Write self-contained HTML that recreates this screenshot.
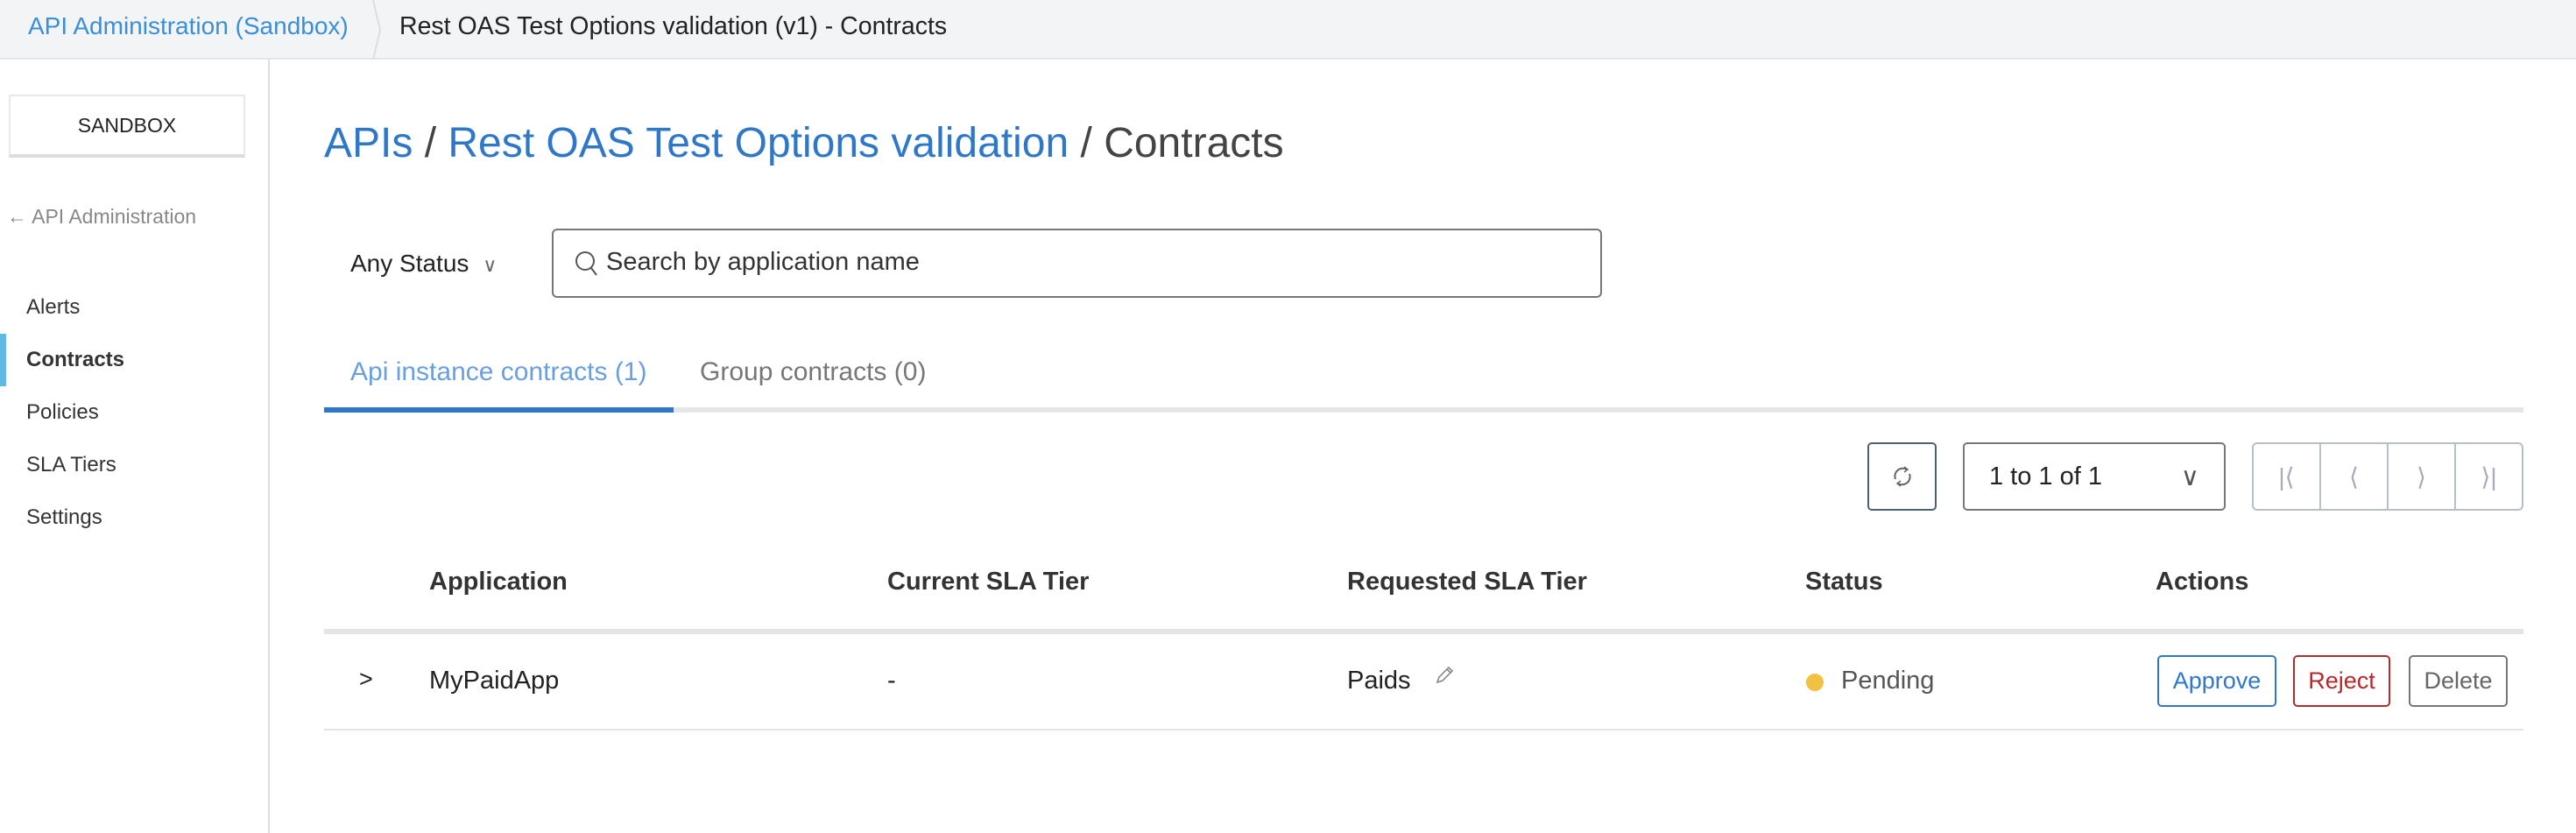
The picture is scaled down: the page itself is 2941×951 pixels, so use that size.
<!DOCTYPE html>
<html><head><meta charset="utf-8"><style>
*{box-sizing:border-box;margin:0;padding:0}
body{width:2941px;height:951px;background:#fff;font-family:"Liberation Sans",sans-serif;color:#333;position:relative;overflow:hidden}
.a{position:absolute;white-space:nowrap}
.top{left:0;top:0;width:2941px;height:68px;background:#f3f4f6;border-bottom:2px solid #e4e5e7}
.side{left:306px;top:68px;width:2px;height:883px;background:#dcdcdc}
.btn{border:2px solid;border-radius:5px;display:flex;align-items:center;justify-content:center;font-size:27px}
.nav{left:30px;font-size:24px;color:#333}
.h{font-weight:bold;font-size:29px;color:#333}
</style></head><body>
<div class="a top"></div>
<div class="a" style="left:32px;top:14px;font-size:28px;color:#3a8fd6">API Administration (Sandbox)</div>
<svg class="a" style="left:424px;top:0" width="14" height="68"><path d="M2 0 L10 34 L2 68" stroke="#dcdde0" stroke-width="2" fill="none"/></svg>
<div class="a" style="left:456px;top:14px;font-size:28.5px;color:#222">Rest OAS Test Options validation (v1) - Contracts</div>
<div class="a side"></div>
<div class="a" style="left:10px;top:108px;width:270px;height:72px;border:2px solid #e8e8e8;border-bottom:4px solid #ddd;display:flex;align-items:center;justify-content:center;font-size:23px;color:#222">SANDBOX</div>
<div class="a" style="left:8px;top:234px;font-size:23px;color:#888">&#8592; API Administration</div>
<div class="a nav" style="top:337px">Alerts</div>
<div class="a" style="left:0;top:381px;width:7px;height:60px;background:#5fb8e6"></div>
<div class="a nav" style="top:397px;font-weight:bold">Contracts</div>
<div class="a nav" style="top:457px">Policies</div>
<div class="a nav" style="top:517px">SLA Tiers</div>
<div class="a nav" style="top:577px">Settings</div>
<div class="a" style="left:370px;top:136px;font-size:48px;color:#444"><span style="color:#2f78c8">APIs</span> / <span style="color:#2f78c8">Rest OAS Test Options validation</span> / Contracts</div>
<div class="a" style="left:400px;top:285px;font-size:28px;color:#222">Any Status <span style="font-size:22px;color:#666;margin-left:8px">&#8744;</span></div>
<div class="a" style="left:630px;top:261px;width:1199px;height:79px;border:2px solid #777;border-radius:6px"></div>
<svg class="a" style="left:655px;top:285px" width="30" height="32"><circle cx="13" cy="13" r="10" stroke="#555" stroke-width="2" fill="none"/><path d="M20 21 L26 29" stroke="#555" stroke-width="2"/></svg>
<div class="a" style="left:692px;top:283px;font-size:29px;color:#333">Search by application name</div>
<div class="a" style="left:400px;top:408px;font-size:30px;color:#6a9fdd">Api instance contracts (1)</div>
<div class="a" style="left:799px;top:408px;font-size:30px;color:#777">Group contracts (0)</div>
<div class="a" style="left:370px;top:465px;width:2511px;height:6px;background:#e6e6e6"></div>
<div class="a" style="left:370px;top:465px;width:399px;height:6px;background:#2f78c8"></div>
<div class="a btn" style="left:2132px;top:505px;width:79px;height:78px;border-color:#4d5f73"><svg width="30" height="30"><path d="M7 18 A9 9 0 0 1 20 7 M23 12 A9 9 0 0 1 10 23" stroke="#666" stroke-width="2" fill="none"/><path d="M17 4 L21 7 L17 10 M13 26 L9 23 L13 20" stroke="#666" stroke-width="1.5" fill="none"/></svg></div>
<div class="a btn" style="left:2241px;top:505px;width:300px;height:78px;border-color:#777;justify-content:space-between;padding:0 28px;color:#222;font-size:29px"><span>1 to 1 of 1</span><span style="color:#555">&#8744;</span></div>
<div class="a" style="left:2571px;top:505px;width:310px;height:78px;border:2px solid #b8bfc7;border-radius:6px;display:flex">
<div style="flex:1;border-right:2px solid #b8bfc7;display:flex;align-items:center;justify-content:center;color:#aab;font-size:28px">|&#10216;</div>
<div style="flex:1;border-right:2px solid #b8bfc7;display:flex;align-items:center;justify-content:center;color:#aab;font-size:28px">&#10216;</div>
<div style="flex:1;border-right:2px solid #b8bfc7;display:flex;align-items:center;justify-content:center;color:#aab;font-size:28px">&#10217;</div>
<div style="flex:1;display:flex;align-items:center;justify-content:center;color:#aab;font-size:28px">&#10217;|</div></div>
<div class="a h" style="left:490px;top:648px">Application</div>
<div class="a h" style="left:1013px;top:648px">Current SLA Tier</div>
<div class="a h" style="left:1538px;top:648px">Requested SLA Tier</div>
<div class="a h" style="left:2061px;top:648px">Status</div>
<div class="a h" style="left:2461px;top:648px">Actions</div>
<div class="a" style="left:370px;top:718px;width:2511px;height:6px;background:#e4e4e4"></div>
<div class="a" style="left:410px;top:760px;font-size:27px;color:#222">&gt;</div>
<div class="a" style="left:490px;top:761px;font-size:29px;color:#222">MyPaidApp</div>
<div class="a" style="left:1013px;top:761px;font-size:29px;color:#222">-</div>
<div class="a" style="left:1538px;top:761px;font-size:29px;color:#222">Paids</div>
<svg class="a" style="left:1636px;top:758px" width="26" height="26"><path d="M5 21 L7 15 L18 4 L22 8 L11 19 Z M16 6 L20 10" stroke="#888" stroke-width="1.6" fill="none"/></svg>
<div class="a" style="left:2062px;top:769px;width:20px;height:20px;border-radius:50%;background:#f2c144"></div>
<div class="a" style="left:2102px;top:761px;font-size:29px;color:#555">Pending</div>
<div class="a btn" style="left:2463px;top:748px;width:136px;height:59px;border-color:#2f78c8;color:#2f78c8">Approve</div>
<div class="a btn" style="left:2618px;top:748px;width:111px;height:59px;border-color:#b22a2a;color:#b22a2a">Reject</div>
<div class="a btn" style="left:2750px;top:748px;width:113px;height:59px;border-color:#777;color:#666">Delete</div>
<div class="a" style="left:370px;top:832px;width:2511px;height:2px;background:#e4e4e4"></div>
</body></html>
